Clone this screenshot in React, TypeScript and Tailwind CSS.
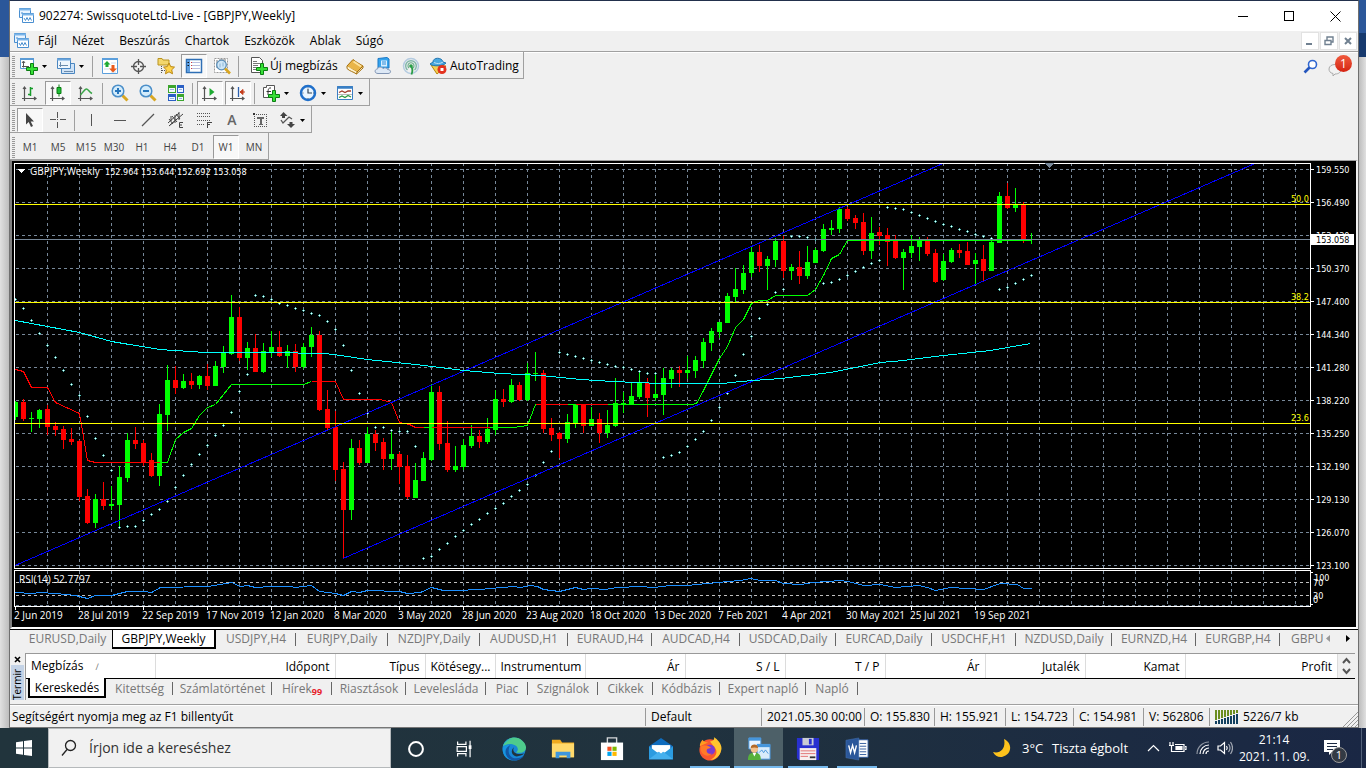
import React from "react";

type Candle = [number, number, number, number, number];

/* up flag, body top, body bottom, wick top, wick bottom */
const candles: Candle[] = [
  [1, 402, 417, 401, 420], [0, 402, 419, 399, 421], [1, 418, 419, 412, 432], [1, 410, 419, 409, 428],
  [0, 409, 427, 405, 435], [0, 426, 430, 422, 436], [0, 429, 440, 426, 449], [0, 439, 442, 428, 445],
  [0, 441, 497, 440, 501], [0, 496, 523, 489, 524], [1, 499, 523, 494, 528], [0, 499, 506, 482, 510],
  [1, 504, 506, 486, 510], [1, 477, 505, 466, 527], [1, 440, 478, 433, 482], [0, 440, 444, 427, 449],
  [0, 443, 462, 440, 466], [0, 460, 476, 453, 477], [1, 414, 476, 404, 486], [1, 380, 415, 365, 431],
  [0, 380, 388, 366, 394], [1, 381, 388, 374, 389], [0, 381, 385, 373, 389], [1, 376, 385, 375, 389],
  [0, 376, 386, 364, 390], [1, 366, 386, 361, 386], [1, 353, 367, 346, 373], [1, 317, 354, 295, 355],
  [0, 317, 358, 307, 361], [1, 348, 358, 342, 370], [0, 348, 372, 334, 372], [1, 351, 372, 343, 373],
  [1, 347, 352, 331, 357], [0, 347, 356, 331, 357], [1, 351, 356, 345, 368], [0, 351, 367, 344, 372],
  [1, 347, 367, 343, 369], [1, 335, 347, 327, 357], [0, 335, 410, 331, 411], [0, 409, 428, 390, 430],
  [0, 427, 470, 411, 481], [0, 469, 510, 462, 558], [1, 448, 510, 439, 520], [0, 448, 463, 440, 465],
  [1, 434, 463, 427, 463], [0, 434, 443, 430, 451], [0, 442, 459, 438, 470], [1, 454, 459, 431, 470],
  [0, 454, 467, 452, 484], [0, 466, 497, 455, 499], [1, 480, 498, 463, 498], [1, 458, 481, 452, 481],
  [1, 392, 460, 384, 461], [0, 392, 444, 386, 450], [0, 443, 470, 421, 472], [1, 466, 470, 446, 472],
  [1, 445, 467, 439, 470], [1, 436, 446, 425, 448], [0, 436, 442, 430, 448], [1, 429, 442, 418, 444],
  [1, 399, 430, 390, 435], [0, 399, 402, 389, 407], [1, 385, 402, 379, 403], [0, 385, 400, 382, 401],
  [1, 373, 400, 363, 401], [1, 373, 374, 352, 381], [0, 373, 429, 370, 433], [0, 428, 435, 418, 441],
  [0, 433, 439, 432, 458], [1, 422, 439, 414, 443], [1, 404, 423, 404, 428], [0, 404, 426, 404, 433],
  [1, 419, 426, 407, 426], [0, 419, 433, 413, 443], [1, 425, 433, 410, 438], [1, 403, 426, 378, 427],
  [1, 403, 404, 392, 413], [1, 396, 404, 383, 405], [1, 383, 397, 372, 399], [0, 383, 398, 378, 417],
  [1, 394, 398, 373, 401], [1, 378, 395, 368, 415], [1, 370, 379, 368, 388], [0, 370, 373, 366, 387],
  [1, 370, 373, 356, 379], [1, 360, 371, 356, 378], [1, 342, 361, 338, 368], [1, 331, 343, 328, 351],
  [1, 322, 332, 322, 338], [1, 296, 323, 293, 323], [1, 289, 297, 268, 302], [1, 273, 290, 265, 294],
  [1, 252, 273, 247, 277], [0, 252, 266, 245, 272], [1, 259, 266, 256, 290], [1, 241, 260, 238, 267],
  [0, 241, 271, 236, 278], [1, 267, 271, 264, 280], [0, 267, 276, 251, 284], [1, 262, 276, 246, 279],
  [1, 250, 263, 248, 263], [1, 229, 251, 224, 252], [1, 228, 230, 220, 235], [1, 209, 229, 207, 233],
  [0, 209, 219, 207, 221], [0, 218, 223, 215, 229], [0, 222, 251, 213, 255], [1, 233, 251, 217, 259],
  [0, 232, 236, 227, 245], [0, 235, 242, 228, 266], [0, 241, 258, 235, 259], [1, 252, 258, 249, 290],
  [1, 246, 253, 235, 258], [1, 240, 247, 237, 261], [0, 240, 254, 237, 256], [0, 253, 282, 249, 283],
  [1, 261, 280, 254, 281], [1, 250, 262, 248, 263], [0, 250, 253, 244, 258], [0, 251, 265, 242, 265],
  [1, 260, 264, 253, 284], [0, 259, 271, 245, 281], [1, 242, 271, 240, 271], [1, 196, 243, 192, 243],
  [0, 196, 208, 183, 209], [1, 205, 208, 188, 212], [0, 205, 240, 202, 243], [1, 239, 240, 233, 244],
];

/* one parabolic SAR value for every candle */
const sar: number[] = [
  299, 308, 320, 333, 345, 357, 370, 384, 395, 416, 438, 455, 470, 527, 526, 526, 520, 514, 509, 501,
  487, 475, 464, 454, 445, 435, 425, 412, 391, 374, 295, 296, 299, 303, 305, 308, 310, 313, 315, 321,
  329, 345, 370, 393, 413, 427, 427, 430, 431, 431, 446, 558, 556, 549, 543, 536, 530, 524, 519, 513,
  508, 503, 496, 490, 484, 475, 462, 451, 352, 354, 356, 358, 360, 362, 364, 366, 367, 369, 371, 373,
  373, 457, 455, 452, 446, 439, 431, 420, 407, 393, 375, 354, 336, 318, 304, 292, 289, 236, 236, 237,
  239, 283, 282, 279, 275, 271, 267, 263, 260, 207, 208, 209, 212, 215, 218, 221, 224, 226, 229, 231,
  234, 236, 238, 289, 287, 283, 279, 275,
];

const prices = [
  "159.550", "156.490", "153.430", "150.370", "147.400", "144.340", "141.280",
  "138.220", "135.250", "132.190", "129.130", "126.070", "123.100",
];

const dates = [
  "2 Jun 2019", "28 Jul 2019", "22 Sep 2019", "17 Nov 2019", "12 Jan 2020", "8 Mar 2020", "3 May 2020", "28 Jun 2020",
  "23 Aug 2020", "18 Oct 2020", "13 Dec 2020", "7 Feb 2021", "4 Apr 2021", "30 May 2021", "25 Jul 2021", "19 Sep 2021",
];

const trendSegments: [string, string][] = [
  ["#ff0000", "15,369 23,371 31,387 47,387 55,402 79,413 87,460 95,462 159,462"],
  ["#00ff00", "159,462 167,462 175,439 183,432 191,428 199,415 207,407 215,404 231,384 303,384 311,381"],
  ["#ff0000", "311,381 335,381 343,399 380,399 391,402 399,422 409,424 415,427 423,427"],
  ["#00ff00", "423,427 431,427"],
  ["#ff0000", "431,427 489,427"],
  ["#00ff00", "489,427 513,427 527,425 535,404"],
  ["#ff0000", "535,404 567,404"],
  ["#00ff00", "567,404 575,404"],
  ["#ff0000", "575,404 607,404"],
  ["#00ff00", "607,404 691,404 696,403 703,390 719,358 727,346 735,327 743,319 751,303 759,300 767,300 775,295 807,295 815,289 823,275 831,258 839,254 847,240"],
];

const movingAverage =
  "15,320 47,326 79,332 111,341 159,349 205,352 270,352 325,353 340,355 367,359 415,364 463,370 500,373 540,375 580,379 613,381 660,383 722,383 740,381 780,378 830,372 880,362 903,360 943,355 990,350 1030,343";

const rsi =
  "15,592 31,593 40,592 55,593 75,595 87,598 95,595 111,595 127,591 143,591 151,592 160,587 207,586 220,584 231,582 240,586 247,585 255,587 270,586 290,586 295,587 311,585 319,591 335,593 343,595 351,591 359,592 367,590 399,591 407,593 420,592 431,587 443,590 455,590 480,589 490,588 513,586 520,587 530,585 537,586 543,589 559,591 575,587 583,589 591,588 605,589 617,587 640,586 653,587 670,585 687,585 707,583 718,582 727,581 740,580 750,578 760,580 775,580 783,583 800,584 813,582 840,580 852,582 863,585 880,584 895,587 918,585 927,587 935,590 950,587 967,588 983,589 1000,583 1017,584 1023,588 1031,588";

const gridX = Array.from({ length: 40 }, (_, i) => 47 + i * 32);

function Chart() {
  return (
    <svg
      viewBox="12 161 1344 466"
      className="block h-auto w-full font-['Open_Sans',sans-serif]"
      shapeRendering="crispEdges"
      fontSize="10"
      fill="#fff"
      role="img"
      aria-label="GBPJPY, Weekly"
    >
      <defs>
        <clipPath id="plot"><rect x="15" y="164" width="1295" height="404" /></clipPath>
      </defs>
      <rect x="12" y="161" width="1344" height="466" fill="#000" />
      <g stroke="#778899" strokeDasharray="3 3">
        {gridX.map((x) => (
          <React.Fragment key={x}>
            <path d={`M${x + 0.5} 163V568`} />
            <path d={`M${x + 0.5} 571V606`} />
          </React.Fragment>
        ))}
        {prices.map((p, i) => <path key={p} d={`M16 ${169.5 + i * 33}H1310`} />)}
        <path d="M16 605.5H1310" />
      </g>
      <g stroke="#c0c0c0" strokeDasharray="3 3">
        <path d="M16 582.5H1310M16 595.5H1310" />
      </g>
      <g fill="none" stroke="#fff">
        <path d="M14.5 568.5V163.5H1310.5V568.5ZM14.5 570.5H1310.5V606.5H14.5Z" />
        {prices.map((p, i) => <path key={p} d={`M1311 ${169.5 + i * 33}h3`} />)}
        {dates.map((d, i) => <path key={d} d={`M${15.5 + i * 64} 607v3`} />)}
        <path d="M1311 572.5h2M1311 604.5h2" />
      </g>
      <g clipPath="url(#plot)">
        {candles.map(([up, top, bottom, high, low], i) => {
          const x = 15 + i * 8;
          return (
            <g key={i} fill={up ? "#00ff00" : "#ff0000"}>
              <rect x={x} y={high} width="1" height={low - high} />
              <rect x={x - 2} y={top} width="5" height={Math.max(1, bottom - top)} />
            </g>
          );
        })}
        {sar.map((y, i) => (
          <g key={i}>
            <rect x={14 + i * 8} y={y} width="3" height="1" fill="#48b8b0" />
            <rect x={15 + i * 8} y={y - 1} width="1" height="3" fill="#48b8b0" />
            <rect x={15 + i * 8} y={y} width="1" height="1" fill="#ffffff" />
          </g>
        ))}
        <g fill="none">
          {trendSegments.map(([color, points], i) => <polyline key={i} points={points} stroke={color} transform="translate(0.5 0.5)" />)}
          <path d="M15 565.5L943 163.5M343 558.5L1255 163.5" stroke="#0000ff" />
          <polyline points={movingAverage} stroke="#00ffff" transform="translate(0.5 0.5)" />
          <path d="M15 204.5H1310M15 302.5H1310M15 423.5H1310" stroke="#ffff00" />
          <path d="M15 239.5H1310" stroke="#778899" />
          <path d="M847 240.5H1031" stroke="#00ff00" />
        </g>
      </g>
      <polyline points={rsi} fill="none" stroke="#1e90ff" transform="translate(0.5 0.5)" />
      <path d="M17 169h8l-4 4z" />
      <path d="M1044 163h10l-5 5z" fill="#778899" />
      <text x="30" y="175">GBPJPY,Weekly</text>
      <text x="19" y="583">RSI(14) 52.7797</text>
      <g className="font-['DejaVu_Sans_Condensed','DejaVu_Sans',sans-serif]" fontSize="9">
        <text x="105" y="175">152.964 153.644 152.692 153.058</text>
        <g fill="#ffff00" textAnchor="end">
          <text x="1309" y="202">50.0</text>
          <text x="1309" y="300">38.2</text>
          <text x="1309" y="421">23.6</text>
        </g>
        {prices.map((p, i) => <text key={p} x="1316" y={173 + i * 33}>{p}</text>)}
        <rect x="1311" y="234" width="43" height="11" fill="#fff" />
        <text x="1316" y="243" fill="#000">153.058</text>
        <text x="1314" y="581">100</text>
        <text x="1313" y="586">70</text>
        <text x="1313" y="599">30</text>
        <text x="1313" y="603">0</text>
      </g>
      {dates.map((d, i) => <text key={d} x={14 + i * 64} y="619">{d}</text>)}
    </svg>
  );
}

/* ---------- toolbar icons ---------- */

function Ico({ children, crisp }: { children: React.ReactNode; crisp?: boolean }) {
  return (
    <svg viewBox="0 0 18 18" className="size-[18px] shrink-0" fill="none" shapeRendering={crisp ? "crispEdges" : "auto"} aria-hidden="true">
      {children}
    </svg>
  );
}

const Plus = () => <path d="M10.500 6.500h3v4h4v3h-4v4h-3v-4h-4v-3h4z" fill="#35e035" stroke="#0a7d12" />;

const ChartWindow = () => (
  <Ico>
    <path d="M.500 1.500h13v10h-13z" fill="#fff" stroke="#5b9bd5" />
    <path d="M0 2h14" stroke="#5b9bd5" strokeWidth="2" />
    <path d="M3.500 4.500v6M2 6l1.500-2L5 6M2 9.500h7" stroke="#555" />
    <Plus />
  </Ico>
);
const Profiles = () => (
  <Ico>
    <path d="M4.500 6.500h13v10h-13z" fill="#cfe3f7" stroke="#4a86c0" />
    <path d="M.500 1.500h13v10h-13z" fill="#eef6fd" stroke="#4a86c0" />
    <path d="M0 2.500h14" stroke="#6aa5dc" strokeWidth="2" />
    <path d="M2 8.500h9M3.500 5v5M7 14.500h9" stroke="#6c8cac" />
  </Ico>
);
const MarketWatch = () => (
  <Ico>
    <path d="M1.500 1.500h15v15h-15z" fill="#fff" stroke="#5b9fdc" />
    <path d="M1 2h16" stroke="#5b9fdc" strokeWidth="2" />
    <path d="M10 6h5M3 12h5M10 15h5" stroke="#ccddee" />
    <path d="M6 4L9.500 7.500H7.500V10h-3V7.500h-2z" fill="#1faa33" />
    <path d="M12 15.500L8 11.500h2.500V8h3v3.500H16z" fill="#ea5a1c" />
  </Ico>
);
const Target = () => (
  <Ico>
    <circle cx="9.500" cy="9.500" r="5" stroke="#555" strokeWidth="1.300" />
    <path d="M9.500 2v6M9.500 11v6M2 9.500h6M11 9.500h6" stroke="#555" strokeWidth="1.300" />
  </Ico>
);
const FolderStar = () => (
  <Ico>
    <path d="M1 1.500h4l1 1.500h6v5H1z" fill="#f3d66b" stroke="#b99320" />
    <path d="M4.500 9v7M8 13.500H4" stroke="#555" strokeDasharray="1 1" />
    <path d="M12 6l1.700 3.600 3.800.5-2.800 2.700.8 4-3.500-2-3.500 2 .8-4L6.500 10.100l3.800-.5z" fill="#ffd44c" stroke="#b9860e" />
  </Ico>
);
const Navigator = () => (
  <Ico>
    <path d="M1.500 2.500h15v13h-15z" fill="#fff" stroke="#2f6fb5" strokeWidth="1.500" />
    <path d="M3.500 3v12" stroke="#5f9fe0" strokeWidth="3" />
    <path d="M2.500 5.500h1.500M2.500 8.500h1.500" stroke="#111" />
    <path d="M7 5.500h8M7 8.500h8M7 11.500h8" stroke="#b8bfe0" />
    <path d="M6 5.500h1M6 8.500h1M6 11.500h1" stroke="#d04040" />
  </Ico>
);
const Tester = () => (
  <Ico>
    <path d="M1.500 1.500h13v14h-13z" fill="#fff" stroke="#999" strokeDasharray="2 1" />
    <path d="M4 3v8M12 2v7M6 3h5" stroke="#777" />
    <circle cx="8.500" cy="8" r="4.800" fill="#cfe7f8" stroke="#5c8fb8" strokeWidth="1.300" />
    <path d="M7 6.500v4M10 5.500v4" stroke="#8ab4d4" />
    <path d="M12 11.500l5 5" stroke="#d9a520" strokeWidth="2.600" />
  </Ico>
);
const NewOrder = () => (
  <Ico>
    <path d="M1.500.500h8l3 3v12h-11z" fill="#fff" stroke="#555" />
    <path d="M3 4.500h4M3 6.500h7M3 8.500h5M3 10.500h3M3 12.500h3" stroke="#777" />
    <Plus />
  </Ico>
);
const Book = () => (
  <Ico>
    <path d="M1 9l6-6.500c3 2.500 6 4 10 6.500L11 15C8 13 4 12 1 9z" fill="#e9b548" stroke="#a5700e" />
    <path d="M1 9v2.500c3 3 6 3 9.500 5.500L11 15M11 15l6-6v2L10.500 17" fill="#fff3cf" stroke="#a5700e" />
    <path d="M7.500 4.500l7.500 5" stroke="#fde39c" strokeWidth="2" />
  </Ico>
);
const Vps = () => (
  <Ico>
    <path d="M4 1.500L13 .5l2 1.500v9H4z" fill="#35a4ee" stroke="#1b78c6" />
    <path d="M7 3.500h6v6H7z" fill="#d8efff" />
    <path d="M8 5h4M8 7h4" stroke="#2e8ad6" />
    <path d="M4 16.500c-4 0-3.500-4.500-.5-4.500C4 9.500 8 9.500 9 11.500c2-1.500 4.500-.500 4.500 1 4 0 4 4 .5 4z" fill="#dde8f5" stroke="#8195b4" />
  </Ico>
);
const Signals = () => (
  <Ico>
    <circle cx="9" cy="9" r="7.500" stroke="#b4cbe0" strokeWidth="1.500" />
    <path d="M5.500 13a5.300 5.300 0 1 1 7 0" stroke="#7fb6a8" strokeWidth="1.400" />
    <path d="M7 11a3 3 0 1 1 4 0" stroke="#6fae8e" strokeWidth="1.200" />
    <circle cx="9" cy="9" r="1.800" fill="#2a9d46" />
    <path d="M9 9c2 3 2 5 .500 8.500" stroke="#2a9d46" strokeWidth="1.800" />
  </Ico>
);
const AutoTrading = () => (
  <Ico>
    <path d="M2 8l6 9 9-8z" fill="#f3cf55" stroke="#b8860b" />
    <path d="M4 5c0-5 9-5 10 0l3 1c-2 3-13 4-16 1z" fill="#4aa8e0" stroke="#2275b0" />
    <path d="M5 5.500c3 1.500 6 1.500 9-.5" stroke="#bfe2f7" />
    <circle cx="13" cy="12.500" r="4.500" fill="#e3321f" />
    <path d="M11.500 11h3v3h-3z" fill="#fff" />
  </Ico>
);
const Axes = () => <path d="M3.500 3v14M1 14.500h14M2 5l1.500-2L5 5M13 13l2 1.500-2 1.500" stroke="#555" strokeWidth="1.200" />;
const Bars = () => <Ico><Axes /><path d="M9.500 3v9M7 10.500h2.500M9.500 4.500H12" stroke="#169b2a" strokeWidth="1.500" /></Ico>;
const CandleIcon = () => <Ico><Axes /><path d="M10 .5v12" stroke="#0a7d12" /><path d="M8 3.500h4v6H8z" fill="#1fbf37" stroke="#0a7d12" /></Ico>;
const LineIcon = () => <Ico><Axes /><path d="M3.500 11C6 8 8 5 9.500 5S12 8 15 9.500" stroke="#3aa648" strokeWidth="1.500" /></Ico>;
const Zoom = ({ plus }: { plus?: boolean }) => (
  <Ico>
    <path d="M11.500 11.500l5 5" stroke="#d8a722" strokeWidth="3" />
    <circle cx="7" cy="7" r="5.800" fill="#d4ecfb" stroke="#4b8fc9" strokeWidth="1.500" />
    <path d={plus ? "M4 7h6M7 4v6" : "M4 7h6"} stroke="#2776bd" strokeWidth="2" />
  </Ico>
);
const Tile = () => (
  <Ico crisp>
    <path d="M1 1h8v8H1zM10 10h7v7h-7z" fill="#3ba52e" />
    <path d="M10 1h7v8h-7zM1 10h8v7H1z" fill="#2a5fc4" />
    <path d="M2 4h6v4H2zM11 4h5v4h-5zM2 13h6v3H2zM11 13h5v3h-5z" fill="#f3f8ff" />
    <path d="M3 5.500h4M12 5.500h3M3 14.500h4M12 14.500h3" stroke="#98b4e0" />
  </Ico>
);
const AutoScroll = () => <Ico><Axes /><path d="M8.500 4l5 4-5 4z" fill="#1faa33" /></Ico>;
const ShiftIcon = () => <Ico><Axes /><path d="M9.500 3v10" stroke="#2b5fae" strokeWidth="1.300" /><path d="M16 8h-5M14 5.500L11 8l3 2.500z" fill="#c43d1b" stroke="#c43d1b" /></Ico>;
const Indicator = () => (
  <Ico>
    <path d="M1.500 3.500h3v-2h8v12h-11z" fill="#fff" stroke="#555" />
    <path d="M9 4c-3-.500-3 2-3 7M4.500 7.500H9" stroke="#333" />
    <Plus />
  </Ico>
);
const Clock = () => (
  <Ico>
    <circle cx="9" cy="9" r="7" fill="#e9f5ff" stroke="#1f6fca" strokeWidth="2.500" />
    <path d="M9 5v4h4" stroke="#334455" strokeWidth="1.200" />
    <path d="M9 3.500v1M9 14v1M3.500 9h1M14 9h1" stroke="#556677" />
  </Ico>
);
const Template = () => (
  <Ico>
    <path d="M1.500 2.500h15v13h-15z" fill="#fff" stroke="#3a7fc4" />
    <path d="M1 3.500h16" stroke="#3a7fc4" strokeWidth="2.500" />
    <path d="M3 8.500l3-1.500L9 8.500 12 7h3" stroke="#a33d2c" strokeWidth="1.300" />
    <path d="M2 10.500h14" stroke="#bbb" />
    <path d="M3 13.500L6 12l3 1.500 3-2 3 1.500" stroke="#2e9a3e" strokeWidth="1.300" />
  </Ico>
);
const Cursor = () => <Ico><path d="M5 2v11.500l2.700-2.500 2.300 5 2-1L9.700 10.500H13z" fill="#444" /></Ico>;
const Cross = () => <Ico crisp><path d="M8.500 1v6M8.500 11v6M1 8.500h6M11 8.500h6M8 8.500h1" stroke="#555" /></Ico>;
const VLine = () => <Ico crisp><path d="M8.500 3v12" stroke="#555" /></Ico>;
const HLine = () => <Ico crisp><path d="M3 9.500h12" stroke="#555" /></Ico>;
const DLine = () => <Ico><path d="M3 15L15 3" stroke="#555" strokeWidth="1.300" /></Ico>;
const Channel = () => (
  <Ico>
    <path d="M1 12L12 2M3 14L16 3M2 8l4 5M5 5l5 6M9 3l4 5M4 10V5M8 12V4M12 9V1M2 15l8-7" stroke="#444" />
    <path d="M16 11.500h-3.500v5H16M12.500 14H15" stroke="#444" />
  </Ico>
);
const Fibo = () => (
  <Ico crisp>
    <path d="M2 2.500h14M2 5.500h14M2 9.500h14M2 13.500h8" stroke="#555" strokeDasharray="1 1" />
    <path d="M12.500 17v-6h4M12 13.500h3" stroke="#444" />
  </Ico>
);
const LetterA = () => <span className="font-['Open_Sans',sans-serif] text-sm leading-none font-semibold text-[#666]">A</span>;
const LabelT = () => (
  <Ico crisp>
    <path d="M3 3.500h13M3 15.500h13M3.500 3v13M15.500 3v13" stroke="#555" strokeDasharray="1 1" />
    <path d="M2 2h2v2H2z" fill="#333" />
    <path d="M6 6h7v2H6zM9 6h2v8H9zM8 13h4v1H8z" fill="#666" />
  </Ico>
);
const Arrows = () => (
  <Ico>
    <path d="M5.500 1l4 4-2.500 0v2h-3V5h-2zM13 17L9 13h2.500v-2h3v2H17z" fill="#444" />
    <path d="M3 9l2 3 6-6 3 2" stroke="#555" strokeWidth="1.300" />
  </Ico>
);

/* ---------- toolbars ---------- */

function Tool({ label, children, pressed, drop, wide }: { label: string; children: React.ReactNode; pressed?: boolean; drop?: boolean; wide?: string }) {
  const size = wide ?? (drop ? "w-[37px] pl-1 gap-1" : "w-7 justify-center");
  return (
    <button type="button" aria-label={label} aria-pressed={pressed} className={`flex h-full shrink-0 items-center ${size}`}>
      {pressed ? (
        <span className="flex h-6 w-[26px] items-center justify-center border border-t-[#999] border-r-white border-b-white border-l-[#999] bg-[#f8f8f8]">{children}</span>
      ) : children}
      {drop && <svg viewBox="0 0 5 3" className="h-[3px] w-[5px]" aria-hidden="true"><path d="M0 0h5L2.500 3z" fill="#000" /></svg>}
    </button>
  );
}

const Sep = () => <span className="mx-[2px] h-[21px] w-[2px] shrink-0 border-l border-[#a0a0a0]" />;

function Toolbar({ children }: { children: React.ReactNode }) {
  return (
    <div className="flex h-[27px] w-fit items-center border-r border-b border-[#a0a0a0] pt-[2px]" role="toolbar">
      <span className="mr-px ml-[2px] h-[21px] w-[3px] shrink-0 bg-[repeating-linear-gradient(to_bottom,#999_0_1px,#f0f0f0_1px_2px)]" />
      {children}
    </div>
  );
}

const periods = ["M1", "M5", "M15", "M30", "H1", "H4", "D1", "W1", "MN"];

const AppIcon = () => (
  <Ico>
    <path d="M1.500 1.500h11v9h-11z" fill="#e9f4ff" stroke="#4a8fd0" />
    <path d="M1 2.500h12" stroke="#7ab4e8" strokeWidth="2" />
    <path d="M3 6h2" stroke="#4a8fd0" />
    <path d="M4.500 6.500h11v9h-11z" fill="#fff" stroke="#4a8fd0" />
    <path d="M4 7.500h12" stroke="#7ab4e8" strokeWidth="2" />
    <path d="M6 11l1.500 2.500L9 10.500l1.500 3 1.500-3 1.500 3" stroke="#4a8fd0" />
  </Ico>
);

const chartTabs: [string, string][] = [
  ["EURUSD,Daily", "w-[101px]"], ["GBPJPY,Weekly", "w-[104px]"], ["USDJPY,H4", "w-[80px]"], ["EURJPY,Daily", "w-[92px]"],
  ["NZDJPY,Daily", "w-[92px]"], ["AUDUSD,H1", "w-[88px]"], ["EURAUD,H4", "w-[84px]"], ["AUDCAD,H4", "w-[88px]"],
  ["USDCAD,Daily", "w-[96px]"], ["EURCAD,Daily", "w-[96px]"], ["USDCHF,H1", "w-[84px]"], ["NZDUSD,Daily", "w-[96px]"],
  ["EURNZD,H4", "w-[84px]"], ["EURGBP,H4", "w-[84px]"],
];

const columns: [string, string][] = [
  ["Megbízás", "w-[129px]"], ["Időpont", "w-[180px]"], ["Típus", "w-[90px]"], ["Kötésegy...", "w-[70px]"], ["Instrumentum", "w-[90px]"],
  ["Ár", "w-[100px]"], ["S / L", "w-[100px]"], ["T / P", "w-[100px]"], ["Ár", "w-[100px]"], ["Jutalék", "w-[100px]"], ["Kamat", "w-[100px]"], ["Profit", ""],
];

const terminalTabs: [string, string][] = [
  ["Kitettség", "w-[67px]"], ["Számlatörténet", "w-[99px]"], ["Hírek", "w-[60px]"], ["Riasztások", "w-[74px]"], ["Levelesláda", "w-[80px]"],
  ["Piac", "w-[42px]"], ["Szignálok", "w-[70px]"], ["Cikkek", "w-[55px]"], ["Kódbázis", "w-[67px]"], ["Expert napló", "w-[86px]"], ["Napló", "w-[52px]"],
];

const status: [string, string][] = [
  ["Default", "w-[116px]"], ["2021.05.30 00:00", "w-[103px]"], ["O: 155.830", "w-[70px]"], ["H: 155.921", "w-[71px]"],
  ["L: 154.723", "w-[68px]"], ["C: 154.981", "w-[70px]"], ["V: 562806", "w-[66px]"],
];

/* ---------- taskbar ---------- */

function TaskButton({ label, children, running, active }: { label: string; children: React.ReactNode; running?: boolean; active?: boolean }) {
  return (
    <button type="button" aria-label={label} className={`flex h-10 w-[49px] shrink-0 flex-col items-center justify-end ${active ? "bg-[#4d6068]" : ""}`}>
      <svg viewBox="0 0 26 26" className="mb-[5px] size-6" fill="none" aria-hidden="true">{children}</svg>
      <span className={`h-[2px] ${running ? (active ? "w-full bg-[#76b9ed]" : "w-10 bg-[#76b9ed]") : "w-10"}`} />
    </button>
  );
}

function Taskbar() {
  return (
    <footer className="flex h-10 items-center bg-linear-to-r from-[#21343c] via-[#20323e] to-[#1a2744] text-white">
      <button type="button" aria-label="Start" className="flex h-full w-12 shrink-0 items-center justify-center">
        <svg viewBox="0 0 16 16" className="size-4" fill="#fff" aria-hidden="true"><path d="M0 2.300l7-1v6.200H0zM8 1.100L16 0v7.500H8zM0 8.500h7v6.200l-7-1zM8 8.500h8V16l-8-1.100z" /></svg>
      </button>
      <label className="flex h-10 w-[343px] shrink-0 items-center gap-3 border border-[#b5b9bb] bg-[#f1f1f1] pl-3 text-[#333]">
        <svg viewBox="0 0 16 18" className="h-[18px] w-4" fill="none" stroke="#222" strokeWidth="1.300" aria-hidden="true"><circle cx="9.500" cy="6.500" r="5" /><path d="M6 10.500L1 16.500" /></svg>
        <input type="text" aria-label="Keresés" placeholder="Írjon ide a kereséshez" className="w-64 bg-transparent text-sm outline-none placeholder:text-[#333]" />
      </label>
      <TaskButton label="Cortana"><circle cx="13" cy="13" r="7.500" stroke="#fff" strokeWidth="2.200" /></TaskButton>
      <TaskButton label="Feladatnézet"><path d="M5 5v3h9V5M5 21v-3h9v3M4.500 10.500h10v5h-10zM18.500 4v18" stroke="#fff" strokeWidth="1.300" /><path d="M17 9h3v4h-3z" fill="#fff" /></TaskButton>
      <TaskButton label="Edge">
        <circle cx="13" cy="13" r="12.500" fill="#1787d6" />
        <path d="M1 10C4 0 16-2 22 4c6 5 5 12-1 13h-6c3-2 3-6-1-8-5-3-10-1-13 1z" fill="#4ecb8c" />
        <path d="M1 10c2-6 8-9 13-8-6 0-10 3-13 8z" fill="#2bb5c8" />
        <path d="M8 9c-5 4-4 14 5 16-7 1-13-5-12-13 1-3 4-4 7-3z" fill="#1794e0" />
        <path d="M9 9c-4 6-1 14 6 14 4 0 7-1 9-3-4 6-12 7-17 3C2 18 3 11 9 9z" fill="#1257a6" />
        <path d="M13 11c-3 5 3 9 11 7-2 2-5 3-8 3-6-1-7-7-3-10z" fill="#20343e" />
      </TaskButton>
      <TaskButton label="Fájlkezelő">
        <path d="M1 3h9l2 3h13v16H1z" fill="#f0aa1e" /><path d="M1 7h24v15H1z" fill="#ffd96b" />
        <path d="M5 23v-7h16v7h-4v-3h-8v3z" fill="#3f96dc" />
      </TaskButton>
      <TaskButton label="Store">
        <path d="M8 8V1h10v7" stroke="#d5d8da" strokeWidth="1.500" /><path d="M1 6h24v19H1z" fill="#fff" />
        <path d="M8 10.500h4.500V15H8z" fill="#f25022" /><path d="M13.500 10.500H18V15h-4.500z" fill="#7fba00" /><path d="M8 16h4.500v4.500H8z" fill="#00a4ef" /><path d="M13.500 16H18v4.500h-4.500z" fill="#ffb900" />
      </TaskButton>
      <TaskButton label="Posta">
        <path d="M0 10L13 1l13 9v14H0z" fill="#0f6cbd" /><path d="M3 9h20v8H3z" fill="#fff" /><path d="M0 10l13 10 13-10v14H0z" fill="#2b9be0" /><path d="M0 24l13-10L26 24z" fill="#45b0ee" /><path d="M3 9h20L13 18z" fill="#fff" />
      </TaskButton>
      <TaskButton label="Firefox" running>
        <circle cx="13" cy="14" r="11.500" fill="#f9582f" />
        <path d="M13 5c5-1 5-4 4-5 5 3 10 9 8 15-1 5-6 10-12 10 6-3 10-9 4-15z" fill="#ffc52e" />
        <path d="M2 10c0-3 1-5 3-7 1 2 3 3 6 3z" fill="#ff9b20" />
        <circle cx="13" cy="14" r="5.500" fill="#7a3bd0" /><path d="M3 10c4-2 9 0 11 1-2 2-3 1-4 2-2 3 1 6 5 5-4 5-14 1-12-8z" fill="#ff7a28" />
      </TaskButton>
      <TaskButton label="MetaTrader 4" running active>
        <path d="M2 1h13v12H2z" fill="#eaf5ff" stroke="#4595db" /><path d="M2 2.500h13" stroke="#4595db" strokeWidth="3" />
        <path d="M11 8h14v16H11z" fill="#d8ebfb" stroke="#4595db" /><path d="M11 9.500h14" stroke="#4595db" strokeWidth="3" /><path d="M13 17l3-3 2 3 2-3 3 4" stroke="#4595db" />
        <path d="M1 25c0-7 3-8 7-8s7 1 7 8z" fill="#56b13c" /><path d="M6 17l2 4 2-4z" fill="#fff" /><circle cx="8" cy="13" r="4" fill="#f4c18b" /><path d="M4 12c0-5 8-5 8 0-3-1-5-1-8 0z" fill="#b36a28" />
      </TaskButton>
      <TaskButton label="Total Commander" running>
        <path d="M1 1h24v24H3l-2-2z" fill="#2830d0" /><path d="M7 1h12v8H7z" fill="#c9ccd4" /><path d="M14 2h3v6h-3z" fill="#2830d0" />
        <path d="M4 12h18v13H4z" fill="#f7efef" /><path d="M5 15h16M5 18h16M5 21h8" stroke="#e07070" /><path d="M15 22h6" stroke="#333" strokeWidth="2" />
      </TaskButton>
      <TaskButton label="Word" running>
        <path d="M13 3h12v19H13z" fill="#fff" stroke="#2b579a" /><path d="M16 7h7M16 10h7M16 13h7M16 16h7M16 19h7" stroke="#2b579a" />
        <path d="M1 3.500L15 1v24L1 22.500z" fill="#2b579a" stroke="#4b77ba" strokeWidth=".5" /><path d="M4 9l2 8 2.200-8 2.200 8 2-8" stroke="#fff" strokeWidth="1.500" />
      </TaskButton>
      <div className="ml-auto flex h-full items-center">
        <svg viewBox="0 0 20 20" className="mr-[10px] size-5" aria-hidden="true"><path d="M12 1c9 4 8 16-2 18-4 .5-7-1-9-5 8 2 13-4 11-13z" fill="#fdc21c" /></svg>
        <span className="w-[30px] text-[13px] whitespace-nowrap">3°C</span>
        <span className="w-[95px] text-[13px] whitespace-nowrap">Tiszta égbolt</span>
        <svg viewBox="0 0 86 20" className="mr-[6px] h-5 w-[86px]" fill="none" stroke="#fff" strokeWidth="1.200" aria-hidden="true">
          <path d="M1 13l5.500-5.500L12 13" />
          <path d="M28 6.500h9v7H26M38 8.500h1v3h-1M23 4v3M26 4v3M22 7.500h5M24.500 8v5.500h2" />
          <path d="M29 8.500h6v3h-6z" fill="#fff" />
          <path d="M50 16a12 12 0 0 1 12-12" opacity=".5" />
          <path d="M53 16a9 9 0 0 1 9-9M56 16a6 6 0 0 1 6-6M59 16a3 3 0 0 1 3-3" />
          <path d="M71 8h2.500l4-3.500v11l-4-3.500H71zM79.500 8q1.500 2 0 4" />
          <path d="M81.500 6q3 4 0 8M83.500 4q4 6 0 12" opacity=".6" />
        </svg>
        <div className="w-[70px] text-center text-xs leading-[17px] whitespace-nowrap">
          <div>21:14</div>
          <div>2021. 11. 09.</div>
        </div>
        <button type="button" aria-label="Értesítések" className="relative ml-[14px] h-10 w-[38px]">
          <svg viewBox="0 0 38 40" className="h-10 w-[38px]" aria-hidden="true"><path d="M1 12h16v12H9l-3 3v-3H1z" fill="#fff" /><path d="M4 15.500h10M4 18.500h10M4 21.500h6" stroke="#1c2a42" /></svg>
          <span className="absolute top-[19px] left-[8px] flex size-4 items-center justify-center rounded-full border border-[#999] bg-[#333a44] text-[11px]">1</span>
        </button>
        <span className="mr-1 h-10 w-px bg-[#53627a]" />
      </div>
    </footer>
  );
}

export default function App() {
  return (
    <div className="flex min-h-screen flex-col overflow-hidden bg-[#e3e3e3] font-['Open_Sans',sans-serif] text-[11px] leading-4 text-black">
      <div className="flex flex-1">
        <div className="flex w-[9px] shrink-0 flex-col">
          <div className="h-[57px] bg-[#2b579a]" />
          <div className="flex-1 bg-linear-to-r from-[#e0e0e0] to-[#bdbdbd]" />
        </div>
        <main className="flex min-w-0 flex-1 flex-col border-x border-t border-t-[#22304c] border-x-[#6f6f6f] border-b border-b-[#777] bg-[#f0f0f0]">
          <header className="flex h-[30px] items-center bg-white pl-2">
            <AppIcon />
            <h1 className="ml-[3px] text-[12px]">902274: SwissquoteLtd-Live - [GBPJPY,Weekly]</h1>
            <div className="ml-auto flex h-full">
              <button type="button" aria-label="Kis méret" className="flex w-[46px] items-center justify-center"><svg className="size-[11px]" viewBox="0 0 11 11" shapeRendering="crispEdges"><path d="M0 5.500h10" stroke="#000" /></svg></button>
              <button type="button" aria-label="Teljes méret" className="flex w-[46px] items-center justify-center"><svg className="size-[11px]" viewBox="0 0 11 11" fill="none" shapeRendering="crispEdges"><path d="M.500.500h9v9h-9z" stroke="#000" /></svg></button>
              <button type="button" aria-label="Bezárás" className="flex w-[46px] items-center justify-center"><svg className="size-[11px]" viewBox="0 0 11 11"><path d="M.500.500l10 10M10.500.500l-10 10" stroke="#000" /></svg></button>
            </div>
          </header>
          <nav className="flex h-[21px] items-center border-b border-[#a0a0a0] pl-[3px] text-[12px]">
            <AppIcon />
            <div className="ml-[7px] flex gap-[15px]">
              {["Fájl", "Nézet", "Beszúrás", "Chartok", "Eszközök", "Ablak", "Súgó"].map((m) => <button type="button" key={m}>{m}</button>)}
            </div>
            <div className="ml-auto flex gap-px pr-px">
              {["M5 12h6", "M7 8V5h6v5h-2M5 8.500h6v4H5z", "M6 6l6 6M12 6l-6 6"].map((d, i) => (
                <button type="button" key={d} aria-label={["Kis méret", "Visszaállítás", "Bezárás"][i]} className="flex size-[18px] items-center justify-center border border-[#e2e2e2] bg-white">
                  <svg viewBox="0 0 18 18" className="size-[18px] shrink-0" fill="none" stroke="#708090" strokeWidth="2"><path d={d} strokeWidth={i === 1 ? 1.4 : 2} /></svg>
                </button>
              ))}
            </div>
          </nav>
          <div className="flex items-start border-t border-white">
            <div className="-mt-px">
              <Toolbar>
                <Tool label="Új chart" drop><ChartWindow /></Tool>
                <Tool label="Profilok" drop><Profiles /></Tool>
                <Sep />
                <Tool label="Piacfigyelő"><MarketWatch /></Tool>
                <Tool label="Adatablak"><Target /></Tool>
                <Tool label="Navigátor"><FolderStar /></Tool>
                <Tool label="Terminál" pressed><Navigator /></Tool>
                <Tool label="Stratégia teszter"><Tester /></Tool>
                <Sep />
                <Tool label="Új megbízás" wide="w-[99px] gap-[2px] pl-2 text-[12px]"><NewOrder /><span className="whitespace-nowrap">Új megbízás</span></Tool>
                <Tool label="MetaEditor"><Book /></Tool>
                <Tool label="VPS"><Vps /></Tool>
                <Tool label="Jelek"><Signals /></Tool>
                <Tool label="AutoTrading" wide="w-[98px] gap-[3px] pl-1 text-[12px]"><AutoTrading /><span>AutoTrading</span></Tool>
              </Toolbar>
              <Toolbar>
                <Tool label="Oszlopdiagram"><Bars /></Tool>
                <Tool label="Gyertyák" pressed><CandleIcon /></Tool>
                <Tool label="Vonaldiagram"><LineIcon /></Tool>
                <Sep />
                <Tool label="Nagyítás"><Zoom plus /></Tool>
                <Tool label="Kicsinyítés"><Zoom /></Tool>
                <Tool label="Mozaik"><Tile /></Tool>
                <Sep />
                <Tool label="Automatikus görgetés" pressed><AutoScroll /></Tool>
                <Tool label="Chart eltolás" pressed><ShiftIcon /></Tool>
                <Sep />
                <Tool label="Indikátorok" drop><Indicator /></Tool>
                <Tool label="Időszakok" drop><Clock /></Tool>
                <Tool label="Sablonok" drop><Template /></Tool>
              </Toolbar>
              <Toolbar>
                <Tool label="Kurzor" pressed><Cursor /></Tool>
                <Tool label="Célkereszt"><Cross /></Tool>
                <Sep />
                <Tool label="Függőleges vonal"><VLine /></Tool>
                <Tool label="Vízszintes vonal"><HLine /></Tool>
                <Tool label="Trendvonal"><DLine /></Tool>
                <Tool label="Csatorna"><Channel /></Tool>
                <Tool label="Fibonacci"><Fibo /></Tool>
                <Tool label="Szöveg"><LetterA /></Tool>
                <Tool label="Szövegcímke"><LabelT /></Tool>
                <Tool label="Nyilak" drop><Arrows /></Tool>
              </Toolbar>
              <Toolbar>
                {periods.map((p) => (
                  <Tool key={p} label={p} pressed={p === "W1"}><span className="text-[10px] text-[#444]">{p}</span></Tool>
                ))}
              </Toolbar>
            </div>
            <div className="ml-auto flex gap-[9px] pt-1 pr-[6px]">
              <button type="button" aria-label="Keresés"><svg viewBox="0 0 16 16" className="size-4" fill="none" aria-hidden="true"><circle cx="9.500" cy="5.500" r="4" fill="#fff" stroke="#2f66d0" strokeWidth="1.600" /><path d="M6.500 8.500L1.500 13.500" stroke="#2456bd" strokeWidth="2.600" /></svg></button>
              <button type="button" aria-label="Üzenetek" className="relative h-5 w-6">
                <svg viewBox="0 0 24 20" className="h-5 w-6" aria-hidden="true"><path d="M1 12c0-6 12-6 12 0 0 3-2 5-6 5l-2 2v-2.500C2 16 1 14 1 12z" fill="#f2f2f2" stroke="#aaa" /></svg>
                <span className="absolute -top-[2px] left-[7px] flex size-[17px] items-center justify-center rounded-full bg-linear-to-b from-[#f0593d] to-[#d5200f] text-[12px] text-white">1</span>
              </button>
            </div>
          </div>
          <section className="border-x-2 border-t border-b-2 border-t-[#a0a0a0] border-r-[#f0f0f0] border-b-white border-l-[#808080]">
            <Chart />
          </section>
          <div className="flex h-[21px] items-start overflow-hidden border-t border-black pl-[1px]" role="tablist">
            {chartTabs.map(([name, width], i) =>
              i === 1 ? (
                <button type="button" role="tab" aria-selected="true" key={name} className={`${width} -mt-px h-5 shrink-0 border-r-2 border-b-2 border-l border-black bg-white pt-px text-[12px] leading-[17px]`}>{name}</button>
              ) : (
                <button type="button" role="tab" aria-selected="false" key={name} className={`${width} flex h-[18px] shrink-0 items-center justify-center text-[12px] text-[#777] ${i === 0 ? "pl-3" : "pl-px"}`}>
                  <span className="flex-1 text-center">{name}</span>
                  {i > 1 && <span className="h-[13px] w-px bg-[#666]" />}
                </button>
              ),
            )}
            <button type="button" role="tab" aria-selected="false" className="w-[42px] shrink-0 pl-[11px] text-left text-[12px] leading-[18px] text-[#777]">GBPU</button>
            <svg viewBox="0 0 24 9" className="mt-1 ml-1 h-[9px] w-6" aria-hidden="true"><path d="M4 1v7L0 4.500z" fill="#999" /><path d="M20 1v7l4-3.500z" fill="#000" /></svg>
          </div>
          <section className="mt-[3px] flex border-b border-[#a0a0a0] pr-[3px] pb-1">
            <div className="flex w-[15px] shrink-0 flex-col items-center pt-[1px]">
              <svg viewBox="0 0 7 7" className="mt-[2px] h-[7px] w-[7px]" aria-hidden="true"><path d="M1 1l5 5M6 1L1 6" stroke="#000" strokeWidth="1.600" /></svg>
              <span className="mt-[2px] flex h-[35px] w-[13px] rotate-180 items-center bg-[#c4d3e6] text-[10px] leading-[13px] [writing-mode:vertical-rl]">Termir</span>
            </div>
            <div className="min-w-0 flex-1 border-t border-l border-[#999]">
              <div className="flex border-b border-black bg-white">
                <div className="min-w-0 flex-1">
                  <table className="w-full table-fixed border-collapse">
                    <thead>
                      <tr className="h-6">
                        {columns.map(([name, width], i) => (
                          <th key={i} className={`${width} border-r border-[#dcdcdc] px-[5px] pt-px text-[12px] font-normal whitespace-nowrap ${i === 0 ? "text-left" : "text-right"}`}>
                            {name}
                            {i === 0 && <span className="ml-3 text-[9px] text-[#777]">∕</span>}
                          </th>
                        ))}
                      </tr>
                    </thead>
                  </table>
                </div>
                <div className="flex w-[17px] shrink-0 items-center justify-center bg-[#f0f0f0]">
                  <svg viewBox="0 0 9 18" className="h-[18px] w-[9px]" fill="none" stroke="#555" strokeWidth="2" aria-hidden="true"><path d="M1 6l3.500-4L8 6M1 12l3.500 4L8 12" /></svg>
                </div>
              </div>
              <div className="flex h-5 text-[12px]" role="tablist">
                <button type="button" role="tab" aria-selected="true" className="-mt-px ml-[2px] h-5 w-[78px] border-r-2 border-b-2 border-l-2 border-black bg-white pt-px leading-[17px]">Kereskedés</button>
                {terminalTabs.map(([name, width]) => (
                  <button type="button" role="tab" aria-selected="false" key={name} className={`${width} flex h-[19px] shrink-0 items-center pl-px text-[#777]`}>
                    <span className="flex-1 text-center whitespace-nowrap">
                      {name}
                      {name === "Hírek" && <sub className="text-[9px] font-bold text-[#e8212b]">99</sub>}
                    </span>
                    <span className="h-[13px] w-px bg-[#666]" />
                  </button>
                ))}
              </div>
            </div>
          </section>
          <div className="flex flex-1 items-center border-t border-white pt-px text-[12px] whitespace-nowrap">
            <span className="min-w-0 flex-1 pl-[2px]">Segítségért nyomja meg az F1 billentyűt</span>
            {status.map(([text, width]) => (
              <span key={text} className={`${width} h-[18px] shrink-0 border-l border-[#999] pl-[5px] leading-[18px]`}>{text}</span>
            ))}
            <span className="flex h-[18px] w-[133px] shrink-0 items-center gap-1 border-l border-[#999] pl-[5px]">
              <svg viewBox="0 0 24 14" className="h-[14px] w-6" shapeRendering="crispEdges" aria-hidden="true">
                {Array.from({ length: 8 }, (_, i) => (
                  <React.Fragment key={i}>
                    <rect x={i * 3} y="0" width="2" height={10 - i} fill="#6b8e1f" />
                    <rect x={i * 3} y={11 - i} width="2" height={3 + i} fill="#12405f" />
                  </React.Fragment>
                ))}
              </svg>
              5226/7 kb
            </span>
            <svg viewBox="0 0 16 16" className="size-4 shrink-0 self-end" stroke="#999" aria-hidden="true"><path d="M1 16L16 1M5 16L16 5M9 16l7-7M13 16l3-3" /></svg>
          </div>
        </main>
        <div className="flex w-[7px] shrink-0 flex-col">
          <div className="h-[33px] bg-[#2b579a]" />
          <div className="h-6 bg-[#173a6e]" />
          <div className="flex-1 bg-linear-to-r from-[#bdbdbd] to-[#e0e0e0]" />
        </div>
      </div>
      <Taskbar />
    </div>
  );
}
